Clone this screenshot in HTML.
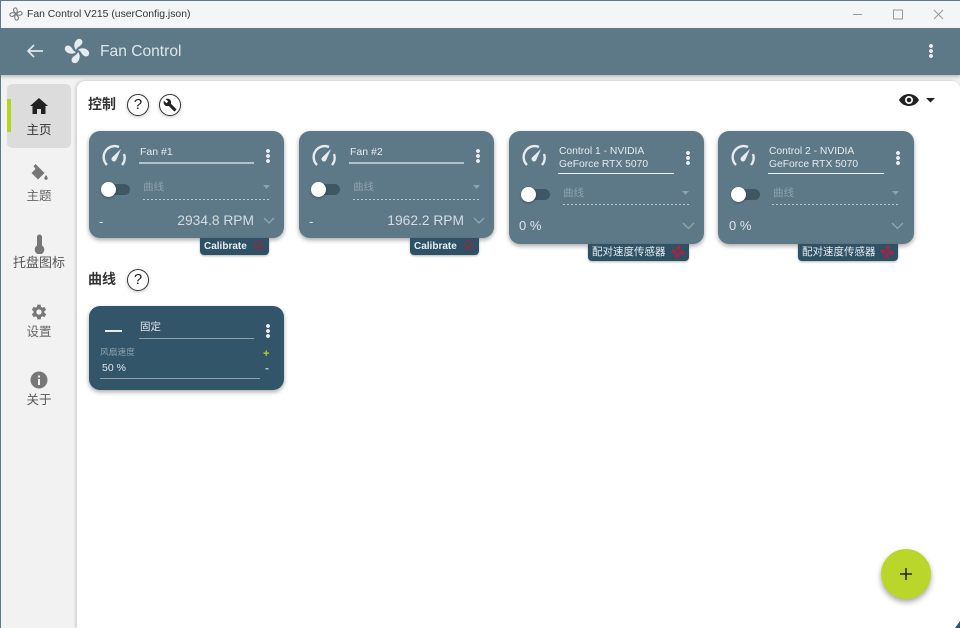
<!DOCTYPE html>
<html><head><meta charset="utf-8"><style>
*{box-sizing:border-box;margin:0;padding:0}
html,body{width:960px;height:628px;overflow:hidden;background:#f2f2f2}
body{position:relative;font-family:"Liberation Sans","Noto Sans CJK SC",sans-serif;color:#222}
.a{position:absolute}
.t{position:absolute;white-space:nowrap}
.card{position:absolute;width:195px;background:#5d7886;border-radius:11px;box-shadow:0 2px 5px rgba(0,0,0,.35)}
.dots{position:absolute;width:4px;height:14px;background:radial-gradient(circle at 2px 2px,#e8edf0 1.8px,transparent 2.1px) 0 0/4px 5px}
.line{position:absolute;height:1.5px;background:#b4c2ca}
.dash{position:absolute;height:1px;background:repeating-linear-gradient(90deg,#b9c6cd 0 2px,transparent 2px 4px)}
.tg{position:absolute;width:28px;height:11px;border-radius:6px;background:#3f5663}
.kn{position:absolute;left:-1px;top:-2px;width:15px;height:15px;border-radius:50%;background:#fff;box-shadow:0 1px 2px rgba(0,0,0,.3)}
.badge{position:absolute;height:17px;background:#2f5166;border-radius:0 0 4px 4px;color:#e8eef1;font-size:10px;font-weight:bold;line-height:16px;box-shadow:0 1px 2px rgba(0,0,0,.3)}
.cal{line-height:18px}
.nav{position:absolute;left:7px;width:64px;text-align:center;font-size:12.500px;color:#666}
.help{position:absolute;width:22px;height:22px;border-radius:50%;border:1.5px solid #333;background:#fff;font-size:15px;line-height:19px;text-align:center;color:#222;box-shadow:0 1px 3px rgba(0,0,0,.25)}
</style></head><body>
<div class="a" style="left:0;top:0;width:960px;height:28px;background:#f3f5f7;border-top:1px solid #5d7886"></div>
<svg class="a" style="left:8px;top:6px" width="16" height="16" viewBox="0 0 24 24" fill="none" stroke="#777" stroke-width="1.500"><path d="M12 11C8 9 7 5 10 3c3-1 5 2 3 8zM13 12c2-4 6-5 8-2 1 3-2 5-8 3zM12 13c4 2 5 6 2 8-3 1-5-2-3-8zM11 12c-2 4-6 5-8 2-1-3 2-5 8-3z"/></svg>
<div class="t" style="left:27px;top:7px;font-size:10.400px;color:#333;line-height:15px">Fan Control V215 (userConfig.json)</div>
<svg class="a" style="left:850px;top:7px" width="100" height="14" fill="none" stroke="#999" stroke-width="1"><path d="M3 7.500h9M43.500 3h9v9h-9zM84 3l9 9M93 3l-9 9"/></svg>

<div class="a" style="left:0;top:28px;width:960px;height:47px;background:#5d7886;box-shadow:0 2px 3px rgba(0,0,0,.22)"></div>
<svg class="a" style="left:26px;top:43px" width="18" height="16" fill="none" stroke="#dfe6ea" stroke-width="1.700"><path d="M17 8H2M8 2 2 8l6 6"/></svg>
<svg class="a" style="left:64px;top:38px" width="26" height="26" viewBox="0 0 26 26" fill="#e6ebee"><path d="M12 12C9 9 10 3 14 1c4-1 6 3 3 6-2 2-4 2-5 5zM14 12c3-3 9-2 11 2 1 4-3 6-6 3-2-2-2-4-5-5zM14 14c3 3 2 9-2 11-4 1-6-3-3-6 2-2 4-2 5-5zM12 14c-3 3-9 2-11-2-1-4 3-6 6-3 2 2 2 4 5 5z"/></svg>
<div class="t" style="left:100px;top:41px;font-size:15.600px;line-height:21px;color:#dfe6ea">Fan Control</div>
<div class="dots" style="left:929px;top:44px;height:15px"></div>

<div class="a" style="left:0;top:0;width:1px;height:628px;background:#5d7886"></div>
<div class="a" style="left:77px;top:81px;width:883px;height:547px;background:#fff;border-radius:8px 8px 0 0;box-shadow:-1px 0 3px rgba(0,0,0,.2)"></div>
<div class="a" style="left:955px;top:621px;width:5px;height:7px;background:#33556a;clip-path:polygon(100% 0,100% 100%,0 100%)"></div>

<div class="a" style="left:7px;top:84px;width:64px;height:64px;background:#dcdcdc;border-radius:5px"></div>
<div class="a" style="left:7px;top:99px;width:4px;height:33px;background:#b4d422"></div>
<svg class="a" style="left:30px;top:98px" width="18" height="16" viewBox="0 0 18 16" fill="#222"><path d="M9 0 0 8h2.500v8h4.500v-5h4v5h4.500V8H18z"/></svg>
<div class="nav" style="top:119px;color:#333;font-size:12.500px">主页</div>
<svg class="a" style="left:31px;top:164px" width="17" height="17" viewBox="0 0 17 17" fill="#777"><path d="M4.500 0 6.500 2 13.500 9 7 15.500.5 9 4.500 5 2.500 2zM15 11c1 1.500 1.700 2.300 1.700 3.100a1.700 1.700 0 0 1-3.400 0c0-.8.700-1.600 1.700-3.100z"/></svg>
<div class="nav" style="top:185px">主题</div>
<svg class="a" style="left:34px;top:234px" width="11" height="20" viewBox="0 0 11 20" fill="#777"><path d="M3 3a2.500 2.500 0 0 1 5 0v8.500a4.800 4.800 0 1 1-5 0z"/></svg>
<div class="nav" style="top:252px;font-size:13px;color:#555;left:5px;width:68px">托盘图标</div>
<svg class="a" style="left:29px;top:302px" width="20" height="20" viewBox="0 0 24 24" fill="#777"><path fill-rule="evenodd" d="M20.400 13a7.600 7.600 0 0 0 0-2l2.100-1.600-2-3.500-2.500 1a7.500 7.500 0 0 0-1.700-1L16 3.200h-4l-.4 2.700a7.500 7.500 0 0 0-1.700 1l-2.500-1-2 3.500L7.500 11a7.600 7.600 0 0 0 0 2l-2.100 1.600 2 3.500 2.500-1a7.500 7.500 0 0 0 1.700 1l.4 2.700h4l.4-2.700a7.500 7.500 0 0 0 1.700-1l2.500 1 2-3.500zM14 15.200a3.200 3.200 0 1 1 0-6.400 3.200 3.200 0 0 1 0 6.400z" transform="translate(-2 0)"/></svg>
<div class="nav" style="top:321px">设置</div>
<svg class="a" style="left:30px;top:371px" width="18" height="18" viewBox="0 0 18 18"><circle cx="9" cy="9" r="8.500" fill="#777"/><rect x="8" y="8" width="2" height="6" fill="#f2f2f2"/><rect x="8" y="4.500" width="2" height="2" fill="#f2f2f2"/></svg>
<div class="nav" style="top:389px;color:#555">关于</div>

<div class="t" style="left:88px;top:95px;font-size:14px;line-height:18px;font-weight:bold;color:#333">控制</div>
<div class="help" style="left:127px;top:94px">?</div>
<div class="help" style="left:159px;top:94px"></div>
<svg class="a" style="left:163px;top:98px" width="14" height="14" viewBox="0 0 24 24" fill="#222"><path d="M22.700 19 13.600 9.900c.9-2.300.4-5-1.500-6.900-2-2-5-2.400-7.400-1.300L9 6 6 9 1.600 4.700C.4 7.100.9 10.100 2.900 12.100c1.900 1.900 4.600 2.400 6.900 1.500l9.100 9.100c.4.400 1 .4 1.400 0l2.300-2.300c.5-.4.500-1.100.1-1.400z"/></svg>
<svg class="a" style="left:899px;top:93px" width="38" height="14" viewBox="0 0 38 14"><path d="M10 1C5.500 1 1.700 3.500 0 7c1.700 3.500 5.500 6 10 6s8.300-2.500 10-6c-1.700-3.500-5.500-6-10-6zm0 10a4 4 0 1 1 0-8 4 4 0 0 1 0 8zm0-6.300a2.300 2.300 0 1 0 0 4.600 2.300 2.300 0 0 0 0-4.600z" fill="#222"/><path d="M27 5h9l-4.500 4.500z" fill="#222"/></svg>

<!-- Card 1 -->
<div class="card" style="left:89px;top:131px;height:107px"></div>
<svg class="a" style="left:101px;top:144px" width="26" height="24" viewBox="0 0 26 24" fill="none" stroke="#e6ebee" stroke-width="2.400"><path d="M6 21a11 11 0 0 1 12-18M23 10a11 11 0 0 1-2 11"/><path d="M20 5l-9 8.500a2.500 2.500 0 0 0 4 3z" fill="#e6ebee" stroke="none"/></svg>
<div class="t" style="left:140px;top:145px;font-size:10.500px;line-height:14px;color:#e6ebee">Fan #1</div>
<div class="line" style="left:139px;top:162px;width:115px"></div>
<div class="dots" style="left:266px;top:149px"></div>
<div class="tg" style="left:102px;top:184px"><div class="kn"></div></div>
<div class="t" style="left:143px;top:180px;font-size:10.500px;line-height:14px;color:#8ea2ad">曲线</div>
<svg class="a" style="left:262px;top:184px" width="9" height="6"><path d="M1 1h7L4.500 5z" fill="#8ea2ad"/></svg>
<div class="dash" style="left:143px;top:199px;width:127px"></div>
<div class="t" style="left:99px;top:214px;font-size:13px;line-height:15px;color:#dfe5e9">-</div>
<div class="t" style="right:706px;top:213px;font-size:13.800px;line-height:16px;color:#d3dce1">2934.8 RPM</div>
<svg class="a" style="left:263px;top:217px" width="12" height="7" fill="none" stroke="#93a6b0" stroke-width="1.300"><path d="M1 1l5 5 5-5"/></svg>
<div class="badge cal" style="left:200px;top:238px;width:69px;padding-left:4px">Calibrate</div>
<svg class="a" style="left:252px;top:239px" width="13" height="13" fill="none" stroke="#b21f3a" stroke-width="1"><circle cx="6.500" cy="6.500" r="4.500" stroke-dasharray="3 1"/><path d="M4 6.500l2 2 3-4"/></svg>

<!-- Card 2 -->
<div class="card" style="left:299px;top:131px;height:107px"></div>
<svg class="a" style="left:311px;top:144px" width="26" height="24" viewBox="0 0 26 24" fill="none" stroke="#e6ebee" stroke-width="2.400"><path d="M6 21a11 11 0 0 1 12-18M23 10a11 11 0 0 1-2 11"/><path d="M20 5l-9 8.500a2.500 2.500 0 0 0 4 3z" fill="#e6ebee" stroke="none"/></svg>
<div class="t" style="left:350px;top:145px;font-size:10.500px;line-height:14px;color:#e6ebee">Fan #2</div>
<div class="line" style="left:349px;top:162px;width:115px"></div>
<div class="dots" style="left:476px;top:149px"></div>
<div class="tg" style="left:312px;top:184px"><div class="kn"></div></div>
<div class="t" style="left:353px;top:180px;font-size:10.500px;line-height:14px;color:#8ea2ad">曲线</div>
<svg class="a" style="left:472px;top:184px" width="9" height="6"><path d="M1 1h7L4.500 5z" fill="#8ea2ad"/></svg>
<div class="dash" style="left:353px;top:199px;width:127px"></div>
<div class="t" style="left:309px;top:214px;font-size:13px;line-height:15px;color:#dfe5e9">-</div>
<div class="t" style="right:496px;top:213px;font-size:13.800px;line-height:16px;color:#d3dce1">1962.2 RPM</div>
<svg class="a" style="left:473px;top:217px" width="12" height="7" fill="none" stroke="#93a6b0" stroke-width="1.300"><path d="M1 1l5 5 5-5"/></svg>
<div class="badge cal" style="left:410px;top:238px;width:69px;padding-left:4px">Calibrate</div>
<svg class="a" style="left:462px;top:239px" width="13" height="13" fill="none" stroke="#b21f3a" stroke-width="1"><circle cx="6.500" cy="6.500" r="4.500" stroke-dasharray="3 1"/><path d="M4 6.500l2 2 3-4"/></svg>

<!-- Card 3 -->
<div class="card" style="left:509px;top:131px;height:113px"></div>
<svg class="a" style="left:521px;top:144px" width="26" height="24" viewBox="0 0 26 24" fill="none" stroke="#e6ebee" stroke-width="2.400"><path d="M6 21a11 11 0 0 1 12-18M23 10a11 11 0 0 1-2 11"/><path d="M20 5l-9 8.500a2.500 2.500 0 0 0 4 3z" fill="#e6ebee" stroke="none"/></svg>
<div class="t" style="left:559px;top:146px;font-size:10.300px;line-height:12.500px;color:#e6ebee">Control 1 - NVIDIA<br>GeForce RTX 5070</div>
<div class="line" style="left:558px;top:173px;width:116px;height:1px;background:#eef2f4"></div>
<div class="dots" style="left:686px;top:151px"></div>
<div class="tg" style="left:522px;top:189px"><div class="kn"></div></div>
<div class="t" style="left:563px;top:186px;font-size:10.500px;line-height:14px;color:#8ea2ad">曲线</div>
<svg class="a" style="left:681px;top:190px" width="9" height="6"><path d="M1 1h7L4.500 5z" fill="#8ea2ad"/></svg>
<div class="dash" style="left:563px;top:204px;width:126px"></div>
<div class="t" style="left:519px;top:218px;font-size:13px;line-height:16px;color:#dfe5e9">0 %</div>
<svg class="a" style="left:682px;top:222px" width="13" height="8" fill="none" stroke="#93a6b0" stroke-width="1.300"><path d="M1 1l5.500 5.500L12 1"/></svg>
<div class="badge" style="left:588px;top:244px;width:101px;padding-left:4px;font-weight:normal;font-size:10.500px">配对速度传感器</div>
<svg class="a" style="left:671px;top:245px" width="14" height="14" viewBox="0 0 26 26" fill="#b21f3a"><path d="M12 12C9 9 10 3 14 1c4-1 6 3 3 6-2 2-4 2-5 5zM14 12c3-3 9-2 11 2 1 4-3 6-6 3-2-2-2-4-5-5zM14 14c3 3 2 9-2 11-4 1-6-3-3-6 2-2 4-2 5-5zM12 14c-3 3-9 2-11-2-1-4 3-6 6-3 2 2 2 4 5 5z"/></svg>

<!-- Card 4 -->
<div class="card" style="left:718px;top:131px;height:113px;width:196px"></div>
<svg class="a" style="left:730px;top:144px" width="26" height="24" viewBox="0 0 26 24" fill="none" stroke="#e6ebee" stroke-width="2.400"><path d="M6 21a11 11 0 0 1 12-18M23 10a11 11 0 0 1-2 11"/><path d="M20 5l-9 8.500a2.500 2.500 0 0 0 4 3z" fill="#e6ebee" stroke="none"/></svg>
<div class="t" style="left:769px;top:146px;font-size:10.300px;line-height:12.500px;color:#e6ebee">Control 2 - NVIDIA<br>GeForce RTX 5070</div>
<div class="line" style="left:768px;top:173px;width:116px;height:1px;background:#eef2f4"></div>
<div class="dots" style="left:896px;top:151px"></div>
<div class="tg" style="left:732px;top:189px"><div class="kn"></div></div>
<div class="t" style="left:773px;top:186px;font-size:10.500px;line-height:14px;color:#8ea2ad">曲线</div>
<svg class="a" style="left:891px;top:190px" width="9" height="6"><path d="M1 1h7L4.500 5z" fill="#8ea2ad"/></svg>
<div class="dash" style="left:772px;top:204px;width:126px"></div>
<div class="t" style="left:729px;top:218px;font-size:13px;line-height:16px;color:#dfe5e9">0 %</div>
<svg class="a" style="left:891px;top:222px" width="13" height="8" fill="none" stroke="#93a6b0" stroke-width="1.300"><path d="M1 1l5.500 5.500L12 1"/></svg>
<div class="badge" style="left:798px;top:244px;width:100px;padding-left:4px;font-weight:normal;font-size:10.500px">配对速度传感器</div>
<svg class="a" style="left:880px;top:245px" width="14" height="14" viewBox="0 0 26 26" fill="#b21f3a"><path d="M12 12C9 9 10 3 14 1c4-1 6 3 3 6-2 2-4 2-5 5zM14 12c3-3 9-2 11 2 1 4-3 6-6 3-2-2-2-4-5-5zM14 14c3 3 2 9-2 11-4 1-6-3-3-6 2-2 4-2 5-5zM12 14c-3 3-9 2-11-2-1-4 3-6 6-3 2 2 2 4 5 5z"/></svg>

<!-- Curves -->
<div class="t" style="left:88px;top:270px;font-size:14px;line-height:18px;font-weight:bold;color:#333">曲线</div>
<div class="help" style="left:127px;top:269px">?</div>
<div class="card" style="left:89px;top:306px;height:84px;background:#33556a"></div>
<div class="a" style="left:105px;top:330px;width:17px;height:2px;background:#e6ebee"></div>
<div class="t" style="left:140px;top:320px;font-size:10.500px;line-height:14px;color:#dfe5e9">固定</div>
<div class="line" style="left:139px;top:337.500px;width:115px;background:#8fa1ac"></div>
<div class="dots" style="left:266px;top:324px"></div>
<div class="t" style="left:100px;top:347px;font-size:8.700px;line-height:11px;color:#8fa3af">风扇速度</div>
<div class="t" style="left:263px;top:348px;font-size:11px;line-height:13px;font-weight:bold;color:#b4d422">+</div>
<div class="t" style="left:102px;top:362px;font-size:10.500px;line-height:13px;color:#dfe5e9">50 %</div>
<div class="t" style="left:265px;top:361px;font-size:12px;line-height:14px;font-weight:bold;color:#b9c6cd">-</div>
<div class="line" style="left:100px;top:377.500px;width:160px;background:#8fa1ac"></div>

<!-- FAB -->
<div class="a" style="left:881px;top:549px;width:50px;height:50px;border-radius:50%;background:#bbd62a;box-shadow:0 3px 6px rgba(0,0,0,.35)"></div>
<svg class="a" style="left:899px;top:567px" width="14" height="14" stroke="#222" stroke-width="1.500"><path d="M7 1v12M1 7h12"/></svg>
</body></html>
